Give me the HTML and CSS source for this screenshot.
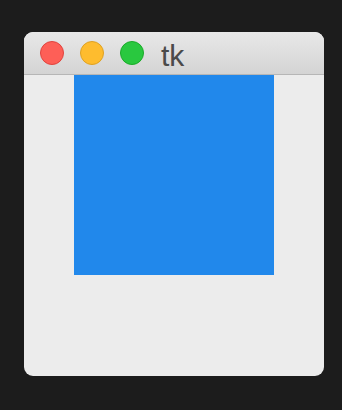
FILE: index.html
```html
<!DOCTYPE html>
<html>
<head>
<meta charset="utf-8">
<link rel="stylesheet" href="styles.css">
</head>
<body>
<div class="window">
  <div class="titlebar">
    <span class="light red"></span>
    <span class="light yellow"></span>
    <span class="light green"></span>
    <span class="title">tk</span>
  </div>
  <div class="content">
    <div class="square"></div>
  </div>
</div>
</body>
</html>
```
FILE: styles.css
```css
html, body {
  margin: 0;
  padding: 0;
  background: #1c1c1c;
  width: 342px;
  height: 410px;
  overflow: hidden;
}
body {
  padding: 32px 0 0 24px;
  box-sizing: border-box;
}
.window {
  width: 300px;
  height: 344px;
  border-radius: 9px;
  background: #ececec;
  overflow: hidden;
  display: flex;
  flex-direction: column;
}
.titlebar {
  height: 42px;
  flex: none;
  background: linear-gradient(#e8e8e8, #d4d4d4);
  border-bottom: 1px solid #b6b6b6;
  display: flex;
  align-items: center;
  padding-left: 16px;
  gap: 16px;
}
.light {
  width: 24px;
  height: 24px;
  border-radius: 50%;
  box-sizing: border-box;
}
.red { background: #fe5f57; border: 1px solid #e0443e; }
.yellow { background: #febc2e; border: 1px solid #dea123; }
.green { background: #29c83f; border: 1px solid #1aab29; }
.title {
  font-family: "Liberation Sans", Arial, sans-serif;
  font-size: 30px;
  color: #4a4a4a;
  margin-left: 1px;
  line-height: 1;
  align-self: flex-start;
  margin-top: 9px;
}
.content {
  flex: 1;
  display: flex;
  justify-content: center;
}
.square {
  width: 200px;
  height: 200px;
  background: #2188eb;
}
```
